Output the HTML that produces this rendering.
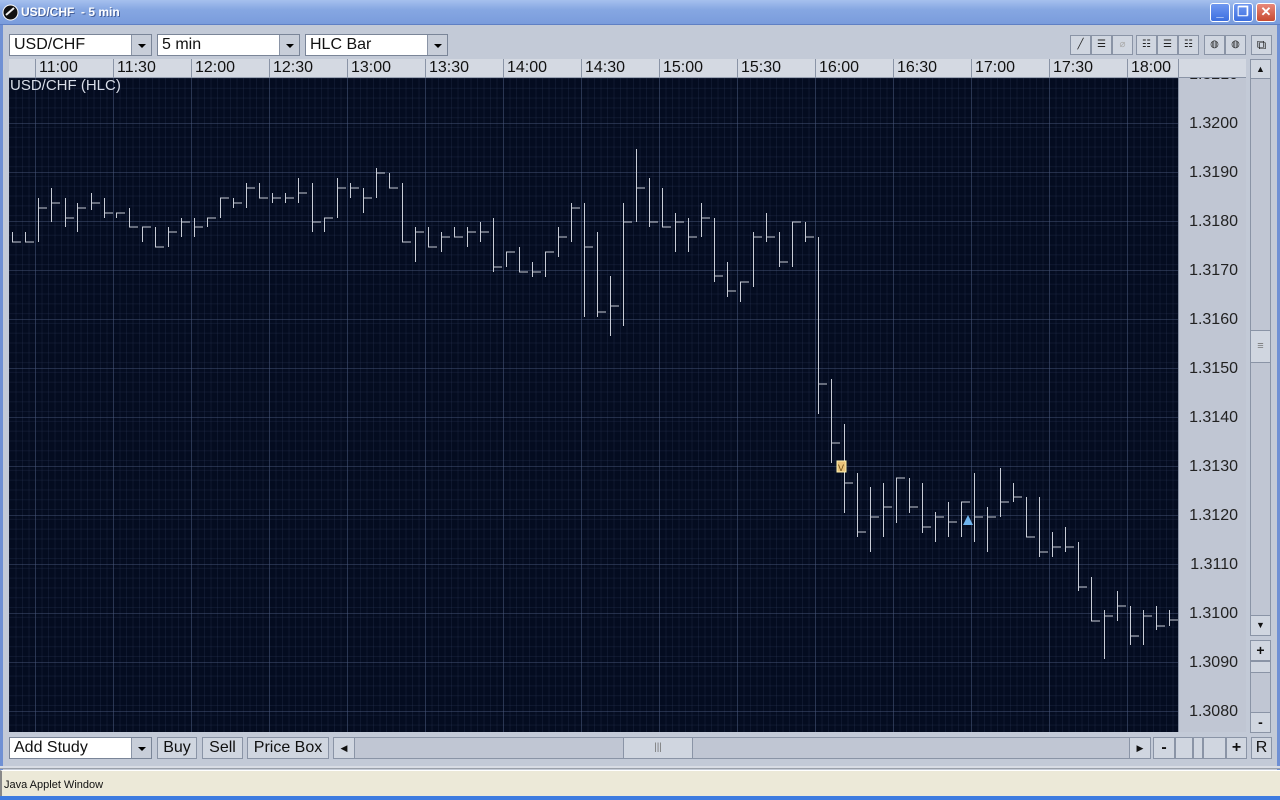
<!DOCTYPE html>
<html><head><meta charset="utf-8"><style>
*{margin:0;padding:0;box-sizing:border-box}
body{width:1280px;height:800px;overflow:hidden;background:#c3cad7;font-family:"Liberation Sans",sans-serif;position:relative}
.a{position:absolute}
.title{left:0;top:0;width:1280px;height:25px;background:linear-gradient(#a6c0ee,#86a7e2 40%,#7a9cdc);border-bottom:1px solid #5f80c4}
.title span{position:absolute;left:21px;top:5px;color:#fff;font-weight:bold;font-size:12px;text-shadow:1px 1px #46609a}
.wb{top:3px;width:20px;height:19px;border:1px solid #fff;border-radius:3px;background:linear-gradient(#6f97f0,#3c6fe0);color:#fff;font-size:13px;text-align:center;line-height:16px;font-weight:bold}
.combo{height:22px;background:#fff;border:1px solid #7a8598;font-size:16px;line-height:20px;padding-left:4px;color:#111}
.combo i{position:absolute;right:0;top:0;width:20px;height:20px;background:#c8ced9;border-left:1px solid #8a94a6}
.combo i:after{content:"";position:absolute;left:6px;top:9px;border-left:4px solid transparent;border-right:4px solid transparent;border-top:4px solid #000}
.btn{height:22px;background:#d0d6e0;border:1px solid #8a94a6;font-size:16px;line-height:20px;text-align:center;color:#111}
.ib{top:35px;width:21px;height:20px;background:#d0d6e0;border:1px solid #8a94a6;font-size:10px;text-align:center;line-height:18px;color:#222}
.tax{left:9px;top:59px;width:1169px;height:19px;background:#d4d9e2;border-bottom:1px solid #9aa3b3}
.tax div{position:absolute;top:0;height:19px;border-left:1px solid #8a94a6;font-size:16px;line-height:18px;padding-left:3px;color:#111}
.chart{left:9px;top:78px;width:1169px;height:654px;background-color:#040c20;
background-image:linear-gradient(90deg,rgba(80,95,130,.42) 1px,transparent 1px),linear-gradient(rgba(80,95,130,.42) 1px,transparent 1px),linear-gradient(90deg,rgba(50,62,95,.24) 1px,transparent 1px),linear-gradient(rgba(50,62,95,.24) 1px,transparent 1px);
background-size:78px 100%,100% 49px,6.5px 100%,100% 9.8px;background-position:26px 0,0 45px,0 0,0 0}
.pax{left:1178px;top:78px;width:68px;height:654px;background:#c0c6d3;border-left:1px solid #8a94a6;overflow:hidden}
.pax div{position:absolute;right:8px;font-size:16px;color:#222}
</style></head><body>
<div class="a title"><svg class="a" style="left:2px;top:4px" width="17" height="17"><circle cx="8.5" cy="8.5" r="7.5" fill="#111" stroke="#fff"/><path d="M4 11 L12 4" stroke="#eee" stroke-width="2"/></svg><span>USD/CHF&nbsp; - 5 min</span>
<div class="a wb" style="left:1210px">_</div><div class="a wb" style="left:1233px">❐</div><div class="a wb" style="left:1256px;background:linear-gradient(#e8887a,#c84a30)">✕</div></div>
<div class="a" style="left:0;top:25px;width:3px;height:745px;background:#6f90d4"></div>
<div class="a" style="right:0;top:25px;width:3px;height:745px;background:#6f90d4"></div>

<div class="a combo" style="left:9px;top:34px;width:143px">USD/CHF<i></i></div>
<div class="a combo" style="left:157px;top:34px;width:143px">5 min<i></i></div>
<div class="a combo" style="left:305px;top:34px;width:143px">HLC Bar<i></i></div>
<div class="a ib" style="left:1070px">╱</div><div class="a ib" style="left:1091px">☰</div><div class="a ib" style="left:1112px;color:#aaa">⌀</div>
<div class="a ib" style="left:1136px">☷</div><div class="a ib" style="left:1157px">☰</div><div class="a ib" style="left:1178px">☷</div>
<div class="a ib" style="left:1204px">◍</div><div class="a ib" style="left:1225px">◍</div>
<div class="a ib" style="left:1251px;font-size:13px">⧉</div>

<div class="a tax">
<div style="left:26px">11:00</div><div style="left:104px">11:30</div><div style="left:182px">12:00</div><div style="left:260px">12:30</div><div style="left:338px">13:00</div><div style="left:416px">13:30</div><div style="left:494px">14:00</div><div style="left:572px">14:30</div><div style="left:650px">15:00</div><div style="left:728px">15:30</div><div style="left:806px">16:00</div><div style="left:884px">16:30</div><div style="left:962px">17:00</div><div style="left:1040px">17:30</div><div style="left:1118px">18:00</div>
</div>

<div class="a chart"></div>
<div class="a" style="left:10px;top:77px;color:#d8dde8;font-size:15px">USD/CHF (HLC)</div>
<svg class="a" style="left:0;top:0" width="1178" height="732" shape-rendering="crispEdges">
<path fill="none" stroke="#c8ccd6" stroke-width="1" d="M12.5 232V242H21M25.5 232V242H34M38.5 198V242M38 208H47M51.5 188V222M51 203H60M65.5 198V227M65 218H74M77.5 203V232M77 208H86M91.5 193V210M91 203H100M104.5 198V218M104 213H113M116.5 213V218M116 213H125M129.5 208V227H138M142.5 227V242M142 227H151M155.5 227V247H164M168.5 227V247M168 232H177M181.5 218V237M181 222H190M194.5 218V237M194 227H203M207.5 218V227M207 218H216M220.5 198V218M220 198H229M233.5 198V208M233 203H242M246.5 183V208M246 188H255M259.5 183V198H268M272.5 193V203M272 198H281M285.5 193V203M285 198H294M298.5 178V203M298 193H307M312.5 183V232M312 222H321M324.5 218V232M324 218H333M337.5 178V218M337 188H346M350.5 183V198M350 188H359M363.5 188V213M363 198H372M376.5 168V198M376 173H385M389.5 173V188H398M402.5 183V242H411M415.5 227V262M415 232H424M428.5 227V247H437M441.5 232V252M441 237H450M454.5 227V237H463M467.5 227V247M467 232H476M480.5 222V242M480 232H489M493.5 218V272M493 267H502M506.5 252V267M506 252H515M519.5 247V272H528M532.5 262V277M532 272H541M545.5 252V277M545 252H554M558.5 227V257M558 237H567M571.5 203V242M571 208H580M584.5 203V317M584 247H593M597.5 232V317M597 312H606M610.5 276V336M610 306H619M623.5 203V326M623 222H632M636.5 149V222M636 188H645M649.5 178V227M649 222H658M662.5 188V227H671M675.5 213V252M675 222H684M688.5 218V252M688 237H697M701.5 203V237M701 218H710M714.5 218V282M714 276H723M727.5 262V297M727 291H736M740.5 282V302M740 282H749M753.5 232V287M753 237H762M766.5 213V242M766 237H775M779.5 232V267M779 262H788M792.5 222V267M792 222H801M805.5 222V242M805 237H814M818.5 237V414M818 384H827M831.5 379V463M831 443H840M844.5 424V513M844 483H853M857.5 473V537M857 532H866M870.5 487V552M870 517H879M883.5 483V537M883 507H892M896.5 478V523M896 478H905M909.5 478V513M909 507H918M922.5 483V533M922 527H931M935.5 512V542M935 517H944M948.5 502V537M948 522H957M961.5 502V537M961 502H970M974.5 473V542M974 517H983M987.5 507V552M987 517H996M1000.5 468V517M1000 502H1009M1013.5 483V502M1013 497H1022M1026.5 497V537H1035M1039.5 497V557M1039 552H1048M1052.5 532V557M1052 547H1061M1065.5 527V552M1065 547H1074M1078.5 542V591M1078 587H1087M1091.5 577V621H1100M1104.5 610V659M1104 616H1113M1117.5 591V621M1117 606H1126M1130.5 606V645M1130 636H1139M1143.5 610V645M1143 616H1152M1156.5 606V630M1156 626H1165M1169.5 610V626M1169 620H1178"/>
<rect x="837" y="461" width="9" height="11" fill="#e9c27a" stroke="#fff3b0" shape-rendering="auto"/>
<text x="838" y="471" font-size="9" fill="#6a4a10" font-family="Liberation Sans">V</text>
<polygon points="963,525 973,525 968,515" fill="#6fb4ee" shape-rendering="auto"/>
</svg>

<div class="a pax">
<div style="top:-12px">1.3210</div>
<div style="top:37px">1.3200</div><div style="top:86px">1.3190</div><div style="top:135px">1.3180</div><div style="top:184px">1.3170</div><div style="top:233px">1.3160</div><div style="top:282px">1.3150</div><div style="top:331px">1.3140</div><div style="top:380px">1.3130</div><div style="top:429px">1.3120</div><div style="top:478px">1.3110</div><div style="top:527px">1.3100</div><div style="top:576px">1.3090</div><div style="top:625px">1.3080</div>
</div>
<div class="a" style="left:1178px;top:59px;width:68px;height:19px;background:#d4d9e2;border-left:1px solid #8a94a6;border-bottom:1px solid #8a94a6"></div>

<div class="a" style="left:1250px;top:59px;width:21px;height:577px;background:#c0c6d3;border:1px solid #8a94a6"></div>
<div class="a btn" style="left:1250px;top:59px;width:21px;height:20px;font-size:9px;line-height:18px">▲</div>
<div class="a btn" style="left:1250px;top:330px;width:21px;height:33px;line-height:30px;font-size:11px;color:#777">≡</div>
<div class="a btn" style="left:1250px;top:615px;width:21px;height:21px;font-size:9px;line-height:19px">▼</div>
<div class="a" style="left:1250px;top:640px;width:21px;height:93px;background:#c0c6d3;border:1px solid #8a94a6"></div>
<div class="a btn" style="left:1250px;top:640px;width:21px;height:21px;font-weight:bold;font-size:14px;line-height:18px">+</div>
<div class="a btn" style="left:1250px;top:661px;width:21px;height:12px"></div>
<div class="a btn" style="left:1250px;top:712px;width:21px;height:21px;font-weight:bold;font-size:14px;line-height:18px">-</div>

<div class="a combo" style="left:9px;top:737px;width:143px">Add Study<i></i></div>
<div class="a btn" style="left:157px;top:737px;width:40px">Buy</div>
<div class="a btn" style="left:202px;top:737px;width:41px">Sell</div>
<div class="a btn" style="left:247px;top:737px;width:82px">Price Box</div>
<div class="a" style="left:333px;top:737px;width:818px;height:22px;background:#c0c6d3;border:1px solid #8a94a6"></div>
<div class="a btn" style="left:333px;top:737px;width:22px;font-size:9px">◀</div>
<div class="a btn" style="left:623px;top:737px;width:70px;font-size:10px;color:#777">|||</div>
<div class="a btn" style="left:1129px;top:737px;width:22px;font-size:9px">▶</div>
<div class="a btn" style="left:1153px;top:737px;width:22px;font-weight:bold">-</div>
<div class="a btn" style="left:1175px;top:737px;width:18px"></div>
<div class="a btn" style="left:1193px;top:737px;width:10px"></div>
<div class="a btn" style="left:1203px;top:737px;width:23px"></div>
<div class="a btn" style="left:1226px;top:737px;width:21px;font-weight:bold">+</div>
<div class="a btn" style="left:1251px;top:737px;width:21px">R</div>

<div class="a" style="left:0;top:766px;width:1280px;height:3px;background:#d8dce4;border-bottom:1px solid #9aa0aa"></div>
<div class="a" style="left:0;top:770px;width:1280px;height:26px;background:#ece9d8;border-top:1px solid #fff;border-left:2px solid #888"></div>
<div class="a" style="left:4px;top:779px;font-size:11px;color:#111">Java Applet Window</div>
<div class="a" style="left:0;top:796px;width:1280px;height:4px;background:#3d7be0"></div>
</body></html>
